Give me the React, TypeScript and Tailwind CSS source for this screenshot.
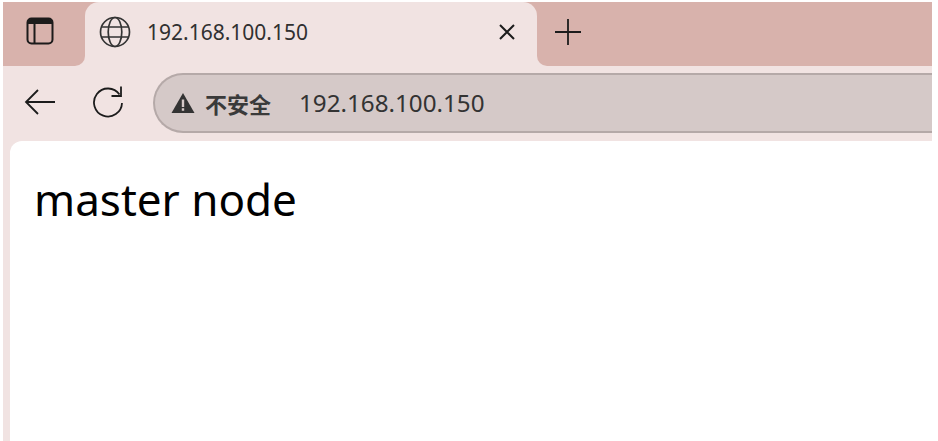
export default function App() {
  const font = { fontFamily: '"Noto Sans", "Open Sans", "Noto Sans CJK SC", sans-serif' };
  return (
    <div className="w-[938px] h-[441px] bg-white pt-[2px] pl-[3px] pr-[6px] overflow-hidden" style={font}>
      <div className="h-[439px] flex flex-col bg-[#f1e3e2]">
        <div className="h-[64px] shrink-0 bg-[linear-gradient(#d8b2ac_50%,#f1e3e2_50%)] flex items-start">
          <div className="w-[82px] h-[64px] bg-[#d8b2ac] rounded-br-[10px] flex items-center justify-center pr-[8px] pb-[6px] shrink-0">
            <svg width="28" height="28" viewBox="0 0 28 28" fill="none">
              <rect x="1.5" y="1.5" width="25" height="25" rx="4" stroke="#1c1b1b" strokeWidth="2" />
              <path d="M2 7V5a3 3 0 0 1 3-3h18a3 3 0 0 1 3 3v2z" fill="#1c1b1b" />
              <path d="M8.5 7v19" stroke="#1c1b1b" strokeWidth="2" />
            </svg>
          </div>
          <div className="w-[452px] h-[64px] bg-[#f1e3e2] rounded-t-[14px] flex items-center pl-[14px] pb-[4px] pr-[21px] shrink-0">
            <svg width="32" height="32" viewBox="0 0 32 32" fill="none" stroke="#333" strokeWidth="1.7">
              <circle cx="16" cy="16" r="14.5" />
              <ellipse cx="16" cy="16" rx="6.8" ry="14.5" />
              <path d="M2.8 11h26.4M2.8 21h26.4" />
            </svg>
            <span className="ml-[16px] text-[21px] text-[#303030] leading-none">192.168.100.150</span>
            <svg className="ml-auto" width="18" height="18" viewBox="0 0 18 18" stroke="#1c1c1c" strokeWidth="2">
              <path d="M2 2l14 14M16 2L2 16" />
            </svg>
          </div>
          <div className="grow h-[64px] bg-[#d8b2ac] rounded-bl-[10px] pl-[17px] pb-[4px] flex items-center">
            <svg width="28" height="28" viewBox="0 0 28 28" stroke="#1c1c1c" strokeWidth="1.8">
              <path d="M14 1v26M1 14h26" />
            </svg>
          </div>
        </div>
        <div className="h-[75px] shrink-0 flex items-start">
          <div className="w-[150px] h-[75px] pl-[21px] flex items-center gap-[36px] pb-[3px] shrink-0">
            <svg width="32" height="28" viewBox="0 0 32 28" fill="none" stroke="#1c1c1c" strokeWidth="1.8">
              <path d="M31 14H2M14 2L2 14l12 12" />
            </svg>
            <svg width="32" height="34" viewBox="0 0 32 34" fill="none" stroke="#1c1c1c" strokeWidth="1.8">
              <path d="M27.5 9.5A14 14 0 1 0 30 18" />
              <path d="M29 1.5v9.5h-9.5" />
            </svg>
          </div>
          <div className="mt-[7px] grow h-[60px] bg-[#d5c9c8] border-y-[2px] border-l-[2px] border-[#b5a9a8] rounded-l-[30px] flex items-center pl-[16px]">
            <svg width="24" height="22" viewBox="0 0 24 22">
              <path d="M12 1L23.5 21H.5z" fill="#333" />
              <path d="M10.8 7.5h2.4v7.5h-2.4zM10.8 16.3h2.4v2.4h-2.4z" fill="#d5c9c8" />
            </svg>
            <span className="ml-[10px] text-[22px] leading-none font-bold text-[#3a3a3a]" style={{ fontFamily: '"Noto Sans CJK SC", sans-serif' }}>不安全</span>
            <span className="ml-[28px] text-[24.2px] leading-none text-[#333]">192.168.100.150</span>
          </div>
        </div>
        <div className="grow ml-[7px] bg-white rounded-tl-[12px] pl-[24px] pt-[29px]">
          <div className="text-[44px] leading-[58px] text-black">master node</div>
        </div>
      </div>
    </div>
  );
}
